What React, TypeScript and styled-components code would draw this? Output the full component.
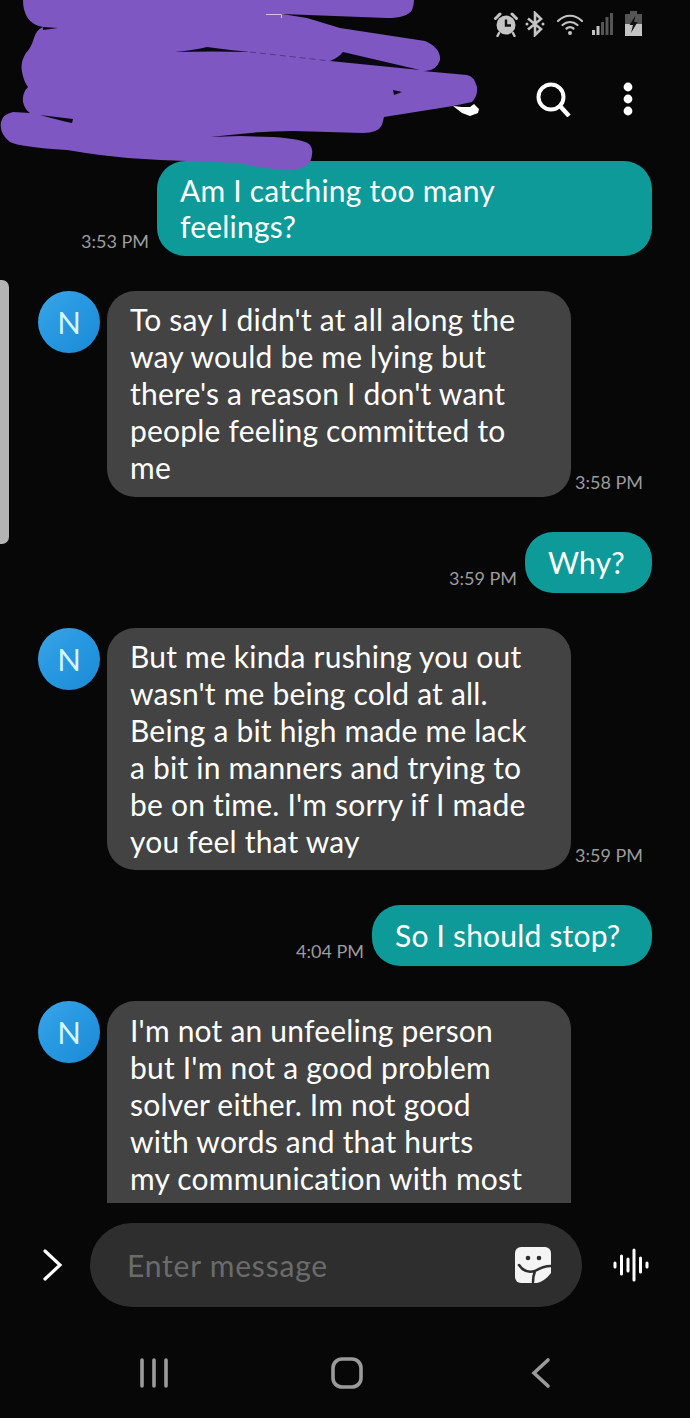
import React from 'react';
import styled, { createGlobalStyle } from 'styled-components';

const GlobalStyle = createGlobalStyle`
  html, body {
    margin: 0;
    padding: 0;
    background: #070707;
  }
  * {
    box-sizing: border-box;
  }
`;

const Screen = styled.div`
  position: relative;
  display: flex;
  flex-direction: column;
  width: 690px;
  height: 1418px;
  overflow: hidden;
  background: #070707;
  font-family: Lato, 'Noto Sans', sans-serif;
  color: #fff;
`;

const StatusBar = styled.div`
  display: flex;
  justify-content: flex-end;
  align-items: center;
  height: 46px;
  padding: 2px 48px 0 0;
`;

const StatusSlot = styled.span<{ $gap: number }>`
  display: flex;
  margin-left: ${(p) => p.$gap}px;
`;

const Toolbar = styled.div`
  display: flex;
  justify-content: flex-end;
  align-items: center;
  gap: 52px;
  height: 115px;
  padding: 0 57px 10px 0;
`;

// scribble the person drew over the contact name
const Scribble = styled.svg`
  position: absolute;
  top: 0;
  left: 0;
  z-index: 5;
`;

const ScrollHandle = styled.div`
  position: absolute;
  top: 280px;
  left: 0;
  width: 9px;
  height: 264px;
  background: #b4b4b4;
  border-radius: 0 7px 7px 0;
`;

const MessageList = styled.div`
  display: flex;
  flex-direction: column;
  gap: 35px;
  height: 1042px;
  overflow: hidden;
`;

const Row = styled.div<{ $mine?: boolean }>`
  display: flex;
  flex-shrink: 0;
  align-items: flex-end;
  justify-content: ${(p) => (p.$mine ? 'flex-end' : 'flex-start')};
  gap: 8px;
  padding: ${(p) => (p.$mine ? '0 38px 0 0' : '0 0 0 38px')};
`;

const Avatar = styled.div`
  display: flex;
  align-items: center;
  justify-content: center;
  align-self: flex-start;
  width: 62px;
  height: 62px;
  margin-right: -1px;
  border-radius: 50%;
  background: linear-gradient(135deg, #3fa6e6 0%, #2a9be3 35%, #1b8ad6 100%);
  color: #d4f6ff;
  font-size: 31px;
`;

const Bubble = styled.div<{ $mine?: boolean; $wide?: number }>`
  display: flex;
  flex-direction: column;
  justify-content: center;
  min-height: 61px;
  width: ${(p) => (p.$wide ? `${p.$wide}px` : 'auto')};
  padding: 10.5px 23px;
  border-radius: 28px;
  background: ${(p) => (p.$mine ? '#0f9a9a' : '#434343')};
  font-size: 30px;
  line-height: 36.95px;
  letter-spacing: 0.2px;
  white-space: nowrap;
`;

const Line = styled.span`
  display: block;
`;

const Time = styled.span<{ $mine?: boolean }>`
  width: 68px;
  margin: ${(p) => (p.$mine ? '0 0 4px 0' : '0 0 4px -4px')};
  color: #9c9c9c;
  font-size: 18px;
  line-height: 22px;
  white-space: nowrap;
`;

const Composer = styled.div`
  display: grid;
  grid-template-columns: 90px 492px 108px;
  align-items: center;
  height: 84px;
  margin-top: 20px;
`;

const SideButton = styled.div<{ $pad: string }>`
  display: flex;
  align-items: center;
  justify-content: center;
  padding: ${(p) => p.$pad};
`;

const InputPill = styled.div`
  display: flex;
  align-items: center;
  justify-content: space-between;
  height: 84px;
  padding: 0 31px 0 37px;
  border-radius: 42px;
  background: #2e2e2e;
`;

const Placeholder = styled.span`
  color: #6b6b6b;
  font-size: 30px;
  letter-spacing: 0.8px;
`;

const NavBar = styled.div`
  display: grid;
  grid-template-columns: repeat(3, 193.5px);
  align-items: center;
  justify-items: center;
  height: 66px;
  margin-top: 33px;
  padding-left: 57px;
`;

type Msg = { mine?: boolean; time: string; lines: string[]; wide?: number };

const messages: Msg[] = [
  { mine: true, time: '3:53 PM', wide: 495, lines: ['Am I catching too many', 'feelings?'] },
  {
    time: '3:58 PM',
    wide: 464,
    lines: [
      "To say I didn't at all along the",
      'way would be me lying but',
      "there's a reason I don't want",
      'people feeling committed to',
      'me',
    ],
  },
  { mine: true, time: '3:59 PM', wide: 127, lines: ['Why?'] },
  {
    time: '3:59 PM',
    wide: 464,
    lines: [
      'But me kinda rushing you out',
      "wasn't me being cold at all.",
      'Being a bit high made me lack',
      'a bit in manners and trying to',
      "be on time. I'm sorry if I made",
      'you feel that way',
    ],
  },
  { mine: true, time: '4:04 PM', wide: 280, lines: ['So I should stop?'] },
  {
    time: '',
    wide: 464,
    lines: [
      "I'm not an unfeeling person",
      "but I'm not a good problem",
      'solver either. Im not good',
      'with words and that hurts',
      'my communication with most',
      'people',
    ],
  },
];

const AlarmIcon = () => (
  <svg width="26" height="26" viewBox="0 0 26 26" fill="none">
    <circle cx="13" cy="14" r="9.5" fill="#c4c4c4" />
    <path d="M13 8.5V14.5H18" stroke="#111" strokeWidth="2.4" />
    <path d="M2.5 7.5L7 3M23.5 7.5L19 3" stroke="#c4c4c4" strokeWidth="3" strokeLinecap="round" />
    <path d="M6 22L4.5 25M20 22L21.5 25" stroke="#c4c4c4" strokeWidth="2.4" strokeLinecap="round" />
  </svg>
);

const BluetoothIcon = () => (
  <svg width="20" height="26" viewBox="0 0 20 26" fill="none">
    <path d="M3 7.5L16 18L10 24V2L16 8L3 18.5" stroke="#c4c4c4" strokeWidth="2.6" />
    <circle cx="2" cy="13" r="1.5" fill="#c4c4c4" />
    <circle cx="18" cy="13" r="1.5" fill="#c4c4c4" />
  </svg>
);

const WifiIcon = () => (
  <svg width="28" height="24" viewBox="0 0 28 24" fill="none">
    <path d="M2 9C9 2 19 2 26 9" stroke="#c4c4c4" strokeWidth="2.2" strokeLinecap="round" />
    <path d="M6.5 13C11 9 17 9 21.5 13" stroke="#c4c4c4" strokeWidth="2.2" strokeLinecap="round" />
    <path d="M10.5 16.5C12.5 15 15.5 15 17.5 16.5" stroke="#c4c4c4" strokeWidth="2.2" strokeLinecap="round" />
    <circle cx="14" cy="21" r="2" fill="#c4c4c4" />
  </svg>
);

const SignalIcon = () => (
  <svg width="21" height="24" viewBox="0 0 21 24">
    <rect x="0" y="18" width="3" height="5" fill="#c4c4c4" />
    <rect x="4.5" y="14" width="3" height="9" fill="#c4c4c4" />
    <rect x="9" y="10" width="3" height="13" fill="#555" />
    <rect x="13.5" y="5" width="3" height="18" fill="#555" />
    <rect x="18" y="1" width="3" height="22" fill="#555" />
  </svg>
);

const BatteryIcon = () => (
  <svg width="17" height="26" viewBox="0 0 17 26">
    <rect x="5" y="0" width="7" height="3" fill="#555" />
    <rect x="0" y="3" width="17" height="10" fill="#555" />
    <rect x="0" y="13" width="17" height="12" fill="#c4c4c4" />
    <path d="M10.5 4.5L4.5 14H8L6 22L12.5 11H9Z" fill="#111" />
  </svg>
);

// only the bottom of the call icon sticks out from under the scribble
const PhoneFragment = () => (
  <svg width="36" height="36" viewBox="0 0 36 36">
    <path d="M6 25L15 32L23 35L31 32L32 28L27 23L23 26L15 26Z" fill="#fff" />
  </svg>
);

const SearchIcon = () => (
  <svg width="36" height="36" viewBox="0 0 36 36" fill="none">
    <circle cx="16" cy="16" r="12.5" stroke="#fff" strokeWidth="4" />
    <path d="M25 25L34 35" stroke="#fff" strokeWidth="4.4" />
  </svg>
);

const DotsIcon = () => (
  <svg width="10" height="34" viewBox="0 0 10 34">
    <circle cx="5" cy="5" r="4.4" fill="#fff" />
    <circle cx="5" cy="17" r="4.4" fill="#fff" />
    <circle cx="5" cy="29" r="4.4" fill="#fff" />
  </svg>
);

const ChevronRight = () => (
  <svg width="20" height="32" viewBox="0 0 20 32" fill="none">
    <path d="M2 2L17 16L2 30" stroke="#fff" strokeWidth="3.2" strokeLinecap="round" />
  </svg>
);

const StickerIcon = () => (
  <svg width="36" height="36" viewBox="0 0 36 36" fill="none">
    <rect width="36" height="36" rx="6" fill="#f4f4f4" />
    <path d="M36 26Q30 34 22 36H36Z" fill="#2e2e2e" />
    <circle cx="13" cy="11" r="2.3" fill="#2e2e2e" />
    <circle cx="24" cy="11" r="2.3" fill="#2e2e2e" />
    <path d="M4 18Q10 27 20 24Q28 19 36 19M20 24Q18 29 18 35" stroke="#2e2e2e" strokeWidth="2.6" strokeLinecap="round" />
  </svg>
);

const WaveIcon = () => (
  <svg width="36" height="34" viewBox="0 0 36 34" fill="none" stroke="#fff" strokeWidth="3" strokeLinecap="round">
    <path d="M2 15V19M8.5 8V26M15 11V23M21 2V32M27.5 10V24M34 15V19" />
  </svg>
);

const RecentsIcon = () => (
  <svg width="30" height="32" viewBox="0 0 30 32" fill="none" stroke="#9a9a9a" strokeWidth="3.6" strokeLinecap="round">
    <path d="M3 3V29M15 3V29M27 3V29" />
  </svg>
);

const HomeIcon = () => (
  <svg width="32" height="32" viewBox="0 0 32 32" fill="none">
    <rect x="2" y="2" width="28" height="28" rx="9" stroke="#9a9a9a" strokeWidth="3.6" />
  </svg>
);

const BackIcon = () => (
  <svg width="20" height="32" viewBox="0 0 20 32" fill="none">
    <path d="M17 3L3 16L17 29" stroke="#9a9a9a" strokeWidth="3.6" strokeLinecap="round" />
  </svg>
);

const ScribbleMark = () => (
  <Scribble width="690" height="175" viewBox="0 0 690 175">
    <path
      fill="#7e57c2"
      d="M23 0Q23 10 27 17Q32 25 43 27Q36 30 34 38Q31 48 26 53Q20 62 22 72Q24 82 28 87Q22 93 23 102Q25 110 30 113L13 112Q3 114 1 122Q-1 134 10 142Q20 147 67 150Q85 153 100 155Q130 159 160 160L240 163Q265 170 290 170Q303 170 310 162Q315 150 309 144Q303 139 273 137L240 136L210 137L240 134Q265 131 293 131L363 133Q378 133 382 125L384 117L453 106L472 102Q478 96 477 87Q474 76 467 75L423 71Q436 72 440 60Q441 48 425 41L340 28L307 18L282 14L387 18Q407 18 412 10Q414 5 414 0Z"
    />
    <path fill="#0a0812" d="M343 52L420 70L330 61Q338 58 343 52Z" />
    <path fill="#0a0812" d="M175 52Q195 50 207 47Q228 50 250 52Q212 51 175 52Z" />
    <path fill="none" stroke="#4f3a86" strokeWidth="1" strokeDasharray="6 4" d="M250 52L330 61" />
    <path fill="#0a0812" d="M40 115L73 119L72 123Q58 120 40 115Z" />
    <path fill="#0a0812" d="M393 90L402 92L394 95Z" />
    <path fill="#0a0812" d="M43 27L58 28L43 30Z" />
    <path fill="none" stroke="#cfc8dc" strokeWidth="1" d="M266 14.5H281.5V18" />
  </Scribble>
);

export default function App() {
  return (
    <Screen>
      <GlobalStyle />
      <StatusBar>
        <StatusSlot $gap={0}>
          <AlarmIcon />
        </StatusSlot>
        <StatusSlot $gap={6}>
          <BluetoothIcon />
        </StatusSlot>
        <StatusSlot $gap={11}>
          <WifiIcon />
        </StatusSlot>
        <StatusSlot $gap={8}>
          <SignalIcon />
        </StatusSlot>
        <StatusSlot $gap={12}>
          <BatteryIcon />
        </StatusSlot>
      </StatusBar>
      <Toolbar>
        <PhoneFragment />
        <SearchIcon />
        <DotsIcon />
      </Toolbar>

      <ScribbleMark />
      <ScrollHandle />

      <MessageList>
        {messages.map((m, i) => (
          <Row key={i} $mine={m.mine}>
            {m.mine && <Time $mine>{m.time}</Time>}
            {!m.mine && <Avatar>N</Avatar>}
            <Bubble $mine={m.mine} $wide={m.wide}>
              {m.lines.map((l) => (
                <Line key={l}>{l}</Line>
              ))}
            </Bubble>
            {!m.mine && m.time && <Time>{m.time}</Time>}
          </Row>
        ))}
      </MessageList>

      <Composer>
        <SideButton $pad="0 0 0 16px">
          <ChevronRight />
        </SideButton>
        <InputPill>
          <Placeholder>Enter message</Placeholder>
          <StickerIcon />
        </InputPill>
        <SideButton $pad="0 10px 0 0">
          <WaveIcon />
        </SideButton>
      </Composer>

      <NavBar>
        <RecentsIcon />
        <HomeIcon />
        <BackIcon />
      </NavBar>
    </Screen>
  );
}
